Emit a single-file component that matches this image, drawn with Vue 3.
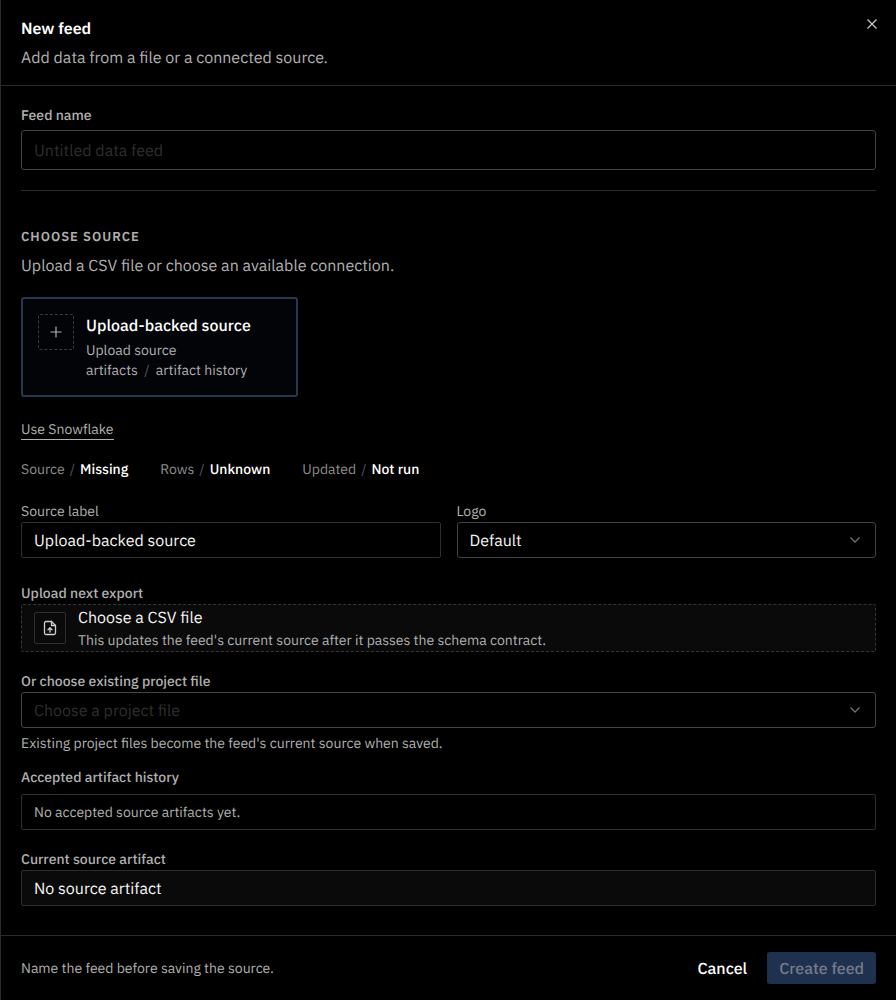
<script setup>
import { ref } from 'vue'

const feedName = ref('')
const sourceLabel = ref('Upload-backed source')
const logo = ref('default')
const projectFile = ref('')

const stats = [
    { label: 'Source', value: 'Missing' },
    { label: 'Rows', value: 'Unknown' },
    { label: 'Updated', value: 'Not run' },
]
</script>

<template>
    <form class="panel" @submit.prevent>
        <header class="header">
            <div>
                <h1>New feed</h1>
                <p class="lead">Add data from a file or a connected source.</p>
            </div>
            <button type="button" class="close" aria-label="Close">
                <svg width="16" height="16" viewBox="0 0 16 16" fill="none" stroke="currentColor" stroke-width="1.3">
                    <path d="M3.5 3.5l9 9M12.5 3.5l-9 9" />
                </svg>
            </button>
        </header>

        <main class="body">
            <div class="field name">
                <label for="feedName">Feed name</label>
                <input id="feedName" v-model="feedName" type="text" class="tall" placeholder="Untitled data feed">
            </div>

            <section class="source">
                <h2>Choose source</h2>
                <p class="lead">Upload a CSV file or choose an available connection.</p>

                <div class="cards">
                    <button type="button" class="card" aria-pressed="true">
                        <span class="plus">
                            <svg width="16" height="16" viewBox="0 0 16 16" fill="none" stroke="currentColor"
                                stroke-width="1.2">
                                <path d="M8 2.5v11M2.5 8h11" />
                            </svg>
                        </span>
                        <span class="cardText">
                            <strong>Upload-backed source</strong>
                            <span>Upload source</span>
                            <span>artifacts <i class="slash">/</i> artifact history</span>
                        </span>
                    </button>
                </div>

                <a href="#" class="link">Use Snowflake</a>

                <dl class="stats">
                    <div v-for="stat in stats" :key="stat.label">
                        <dt>{{ stat.label }}</dt>
                        <i class="slash">/</i>
                        <dd>{{ stat.value }}</dd>
                    </div>
                </dl>
            </section>

            <div class="columns">
                <div class="field">
                    <label for="sourceLabel">Source label</label>
                    <input id="sourceLabel" v-model="sourceLabel" type="text" class="quiet">
                </div>
                <div class="field">
                    <label for="logo">Logo</label>
                    <div class="select">
                        <select id="logo" v-model="logo">
                            <option value="default">Default</option>
                        </select>
                        <svg width="16" height="16" viewBox="0 0 16 16" fill="none" stroke="currentColor"
                            stroke-width="1.3">
                            <path d="M3.5 5.5L8 10l4.5-4.5" />
                        </svg>
                    </div>
                </div>
            </div>

            <div class="field upload">
                <label for="csvFile">Upload next export</label>
                <label for="csvFile" class="dropzone">
                    <span class="fileIcon">
                        <svg width="16" height="16" viewBox="0 0 16 16" fill="none" stroke="currentColor"
                            stroke-width="1.3" stroke-linecap="round" stroke-linejoin="round">
                            <path d="M9.5 1.5H4A1.5 1.5 0 0 0 2.5 3v10A1.5 1.5 0 0 0 4 14.5h8a1.5 1.5 0 0 0 1.5-1.5V5.5z" />
                            <path d="M9.5 1.5v4h4" />
                            <path d="M8 12V8M6 9.8l2-2 2 2" />
                        </svg>
                    </span>
                    <span class="dropText">
                        <span class="dropTitle">Choose a CSV file</span>
                        <span>This updates the feed's current source after it passes the schema contract.</span>
                    </span>
                </label>
                <input id="csvFile" type="file" accept=".csv" class="hidden">
            </div>

            <div class="field">
                <label for="projectFile">Or choose existing project file</label>
                <div class="select">
                    <select id="projectFile" v-model="projectFile" :class="{ empty: !projectFile }">
                        <option value="">Choose a project file</option>
                    </select>
                    <svg width="16" height="16" viewBox="0 0 16 16" fill="none" stroke="currentColor"
                        stroke-width="1.3">
                        <path d="M3.5 5.5L8 10l4.5-4.5" />
                    </svg>
                </div>
                <p class="help">Existing project files become the feed's current source when saved.</p>
            </div>

            <section class="history">
                <h3>Accepted artifact history</h3>
                <p>No accepted source artifacts yet.</p>
            </section>

            <div class="field">
                <label for="artifact">Current source artifact</label>
                <input id="artifact" type="text" class="quiet filled" value="No source artifact" readonly>
            </div>
        </main>

        <footer class="footer">
            <p>Name the feed before saving the source.</p>
            <button type="button" class="button">Cancel</button>
            <button type="submit" class="button primary" disabled>Create feed</button>
        </footer>
    </form>
</template>

<style>
body {
    margin: 0;
    background-color: #000;
}
</style>

<style scoped>
* {
    box-sizing: border-box;
}

.panel {
    min-height: 100vh;
    display: flex;
    flex-direction: column;

    color: #b0b0b0;
    background-color: #000;
    border-left: 1px solid #2b2b2b;

    font-family: "IBM Plex Sans", Roboto, sans-serif;
    font-size: 14px;
    line-height: 20px;
    text-rendering: geometricPrecision;
}

h1,
h2,
h3,
p,
dl,
dd {
    margin: 0;
}

button,
input,
select {
    font-family: inherit;
    text-rendering: inherit;
}

.header {
    display: flex;
    justify-content: space-between;
    align-items: flex-start;
    padding: 16px 16px 14px 20px;
    border-bottom: 1px solid #2b2b2b;
}

h1 {
    margin-bottom: 5px;
    padding-top: 1px;
    color: #fff;
    font-size: 16px;
    font-weight: 600;
    line-height: 24px;
}

.lead {
    padding-bottom: 1px;
    font-size: 16px;
    line-height: 24px;
}

.close {
    display: flex;
    padding: 0;
    color: #c4c4c4;
    background: none;
    border: none;
    cursor: pointer;
}

.body {
    flex: 1;
    padding: 19px 20px 29px;
}

.field {
    display: flex;
    flex-direction: column;
}

label,
h3 {
    font-size: 14px;
    font-weight: 500;
    line-height: 20px;
}

.field label {
    padding-bottom: 1px;
}

input,
select {
    width: 100%;
    height: 36px;
    padding: 2px 12px 0;

    color: #f4f4f4;
    background-color: #000;
    border: 1px solid #444;
    border-radius: 3px;

    font-size: 16px;
}

input::placeholder,
.empty {
    color: #2e2e2e;
    opacity: 1;
}

.tall {
    height: 40px;
}

.quiet {
    border-color: #2e2e2e;
    border-radius: 2px;
}

.filled {
    background-color: #0a0a0a;
}

.name {
    gap: 4px;
    padding-bottom: 20px;
    border-bottom: 1px solid #2b2b2b;
}

.source {
    padding-top: 36px;
}

h2 {
    margin-bottom: 7px;
    font-size: 13px;
    font-weight: 600;
    line-height: 20px;
    letter-spacing: 1px;
    text-transform: uppercase;
}

.cards {
    display: grid;
    grid-template-columns: repeat(3, 1fr);
    gap: 12px;
    margin: 18px 0 23px;
}

.card {
    display: flex;
    align-items: flex-start;
    gap: 12px;
    padding: 15px;

    color: inherit;
    background-color: #030408;
    border: 2px solid #293650;
    border-radius: 3px;

    font-size: 14px;
    line-height: 20px;
    text-align: left;
    cursor: pointer;
}

.plus {
    display: flex;
    align-items: center;
    justify-content: center;
    flex: none;
    width: 36px;
    height: 36px;
    border: 1px dashed #3a3a3a;
    border-radius: 2px;
}

.cardText,
.dropText {
    display: flex;
    flex-direction: column;
}

.cardText strong {
    margin-bottom: 2px;
    color: #fff;
    font-size: 16px;
    font-weight: 500;
    line-height: 24px;
}

.slash {
    margin: 0 3px;
    color: #555;
    font-style: normal;
}

.link {
    display: block;
    width: fit-content;
    color: inherit;
    border-bottom: 1px solid #b0b0b0;
    line-height: 19px;
    text-decoration: none;
}

.stats {
    display: flex;
    gap: 32px;
    margin: 19px 0 22px;
}

.stats div {
    display: flex;
    gap: 5px;
}

.stats .slash {
    margin: 0;
}

dt {
    color: #8d8d8d;
}

dd {
    color: #fff;
    font-weight: 500;
}

.columns {
    display: grid;
    grid-template-columns: 1fr 1fr;
    gap: 16px;
}

.columns label {
    font-weight: 400;
}

.select {
    position: relative;
}

.select select {
    display: block;
    appearance: none;
}

.select svg {
    position: absolute;
    top: 10px;
    right: 13px;
    color: #6f6f6f;
    pointer-events: none;
}

.upload {
    position: relative;
    margin: 25px 0 19px;
}

.field .dropzone {
    display: flex;
    align-items: center;
    gap: 12px;
    height: 48px;
    padding: 0 12px;

    background-color: #0a0a0a;
    border: 1px dashed #363636;
    border-radius: 2px;

    font-weight: 400;
    cursor: pointer;
}

.fileIcon {
    display: flex;
    align-items: center;
    justify-content: center;
    width: 32px;
    height: 32px;
    color: #d0d0d0;
    border: 1px solid #2e2e2e;
    border-radius: 2px;
}

.dropTitle {
    color: #f4f4f4;
    font-size: 16px;
    line-height: 24px;
}

.hidden {
    position: absolute;
    width: 1px;
    height: 1px;
    opacity: 0;
}

.help {
    margin: 5px 0 14px;
}

.history p {
    margin: 7px 0 19px;
    padding: 7px 12px;
    border: 1px solid #2e2e2e;
    border-radius: 2px;
}

.footer {
    display: flex;
    align-items: center;
    gap: 8px;
    padding: 16px 20px;
    border-top: 1px solid #2b2b2b;
}

.footer p {
    flex: 1;
}

.button {
    height: 32px;
    padding: 2px 12px 0;
    color: #fff;
    background: none;
    border: none;
    border-radius: 3px;
    font-size: 16px;
    font-weight: 500;
    cursor: pointer;
}

.primary {
    color: #747c8a;
    background-color: #20304f;
    cursor: default;
}
</style>
